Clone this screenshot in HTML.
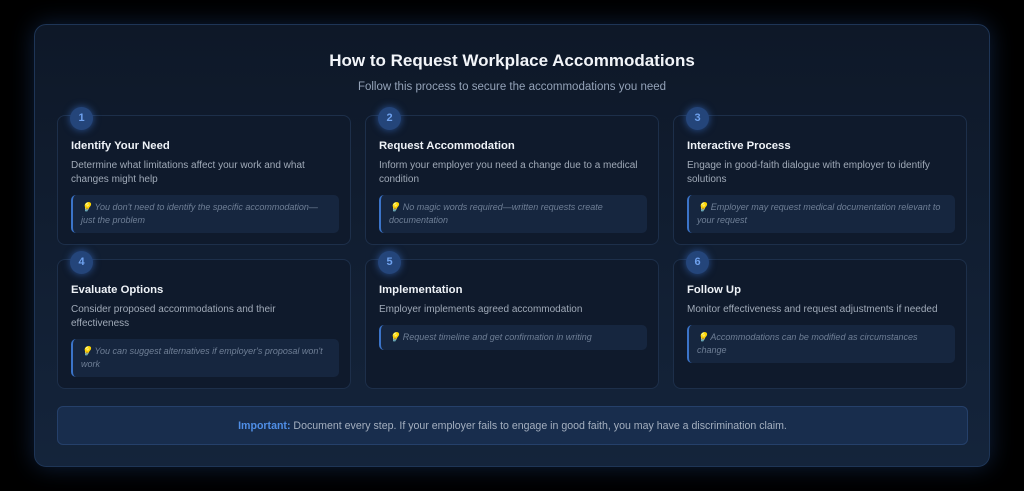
<!DOCTYPE html>
<html><head><style>
*{margin:0;padding:0;box-sizing:border-box}
body{width:1024px;height:491px;background:#000;font-family:"Liberation Sans",sans-serif;position:relative;overflow:hidden}
.wrap{position:absolute;left:34px;top:24px;width:956px;height:443px;border-radius:12px;border:1px solid #1e3556;background:linear-gradient(#0e1828,#14243b);box-shadow:0 0 24px rgba(40,90,170,.35)}
h1{position:absolute;top:26px;width:100%;text-align:center;color:#f2f5f9;font-size:17px;font-weight:bold}
.sub{position:absolute;top:56px;width:100%;text-align:center;color:#94a3b8;font-size:11.5px}
.card{position:absolute;width:294px;height:130px;border:1px solid #1d2f4a;border-radius:8px;background:#0f1a2c}
.num{position:absolute;left:12px;top:-9px;width:23px;height:23px;border-radius:50%;background:#24457a;color:#6ea1ee;font-size:11px;font-weight:bold;text-align:center;line-height:23px;box-shadow:0 0 8px rgba(60,120,220,.6)}
.t{position:absolute;left:13px;top:24px;color:#eef2f7;font-size:11.3px;font-weight:bold}
.d{position:absolute;left:13px;top:43px;width:245px;color:#a0aab8;font-size:10px;line-height:14px}
.tip{position:absolute;left:13px;width:268px;border-left:2px solid #3b74c9;border-radius:5px;background:#16263f;color:#6f7f96;font-style:italic;font-size:9px;line-height:13px;padding:6px 14px 6px 8px}
.note{position:absolute;left:22px;top:381px;width:911px;height:39px;border:1px solid #25406a;border-radius:6px;background:#182d4d;text-align:center;line-height:38px;color:#a4afbf;font-size:10.6px}
.note b{color:#4f8ee6}
</style></head><body>
<div class="wrap">
<h1>How to Request Workplace Accommodations</h1>
<div class="sub">Follow this process to secure the accommodations you need</div>

<div class="card" style="left:22px;top:90px"><div class="num">1</div><div class="t">Identify Your Need</div><div class="d">Determine what limitations affect your work and what changes might help</div><div class="tip" style="top:79px">💡 You don't need to identify the specific accommodation—just the problem</div></div>
<div class="card" style="left:330px;top:90px"><div class="num">2</div><div class="t">Request Accommodation</div><div class="d" style="width:265px">Inform your employer you need a change due to a medical condition</div><div class="tip" style="top:79px">💡 No magic words required—written requests create documentation</div></div>
<div class="card" style="left:638px;top:90px"><div class="num">3</div><div class="t">Interactive Process</div><div class="d" style="width:260px">Engage in good-faith dialogue with employer to identify solutions</div><div class="tip" style="top:79px">💡 Employer may request medical documentation relevant to your request</div></div>

<div class="card" style="left:22px;top:234px"><div class="num">4</div><div class="t">Evaluate Options</div><div class="d" style="width:230px">Consider proposed accommodations and their effectiveness</div><div class="tip" style="top:79px">💡 You can suggest alternatives if employer's proposal won't work</div></div>
<div class="card" style="left:330px;top:234px"><div class="num">5</div><div class="t">Implementation</div><div class="d">Employer implements agreed accommodation</div><div class="tip" style="top:65px">💡 Request timeline and get confirmation in writing</div></div>
<div class="card" style="left:638px;top:234px"><div class="num">6</div><div class="t">Follow Up</div><div class="d" style="width:270px">Monitor effectiveness and request adjustments if needed</div><div class="tip" style="top:65px">💡 Accommodations can be modified as circumstances change</div></div>

<div class="note"><b>Important:</b> Document every step. If your employer fails to engage in good faith, you may have a discrimination claim.</div>
</div>
</body></html>
